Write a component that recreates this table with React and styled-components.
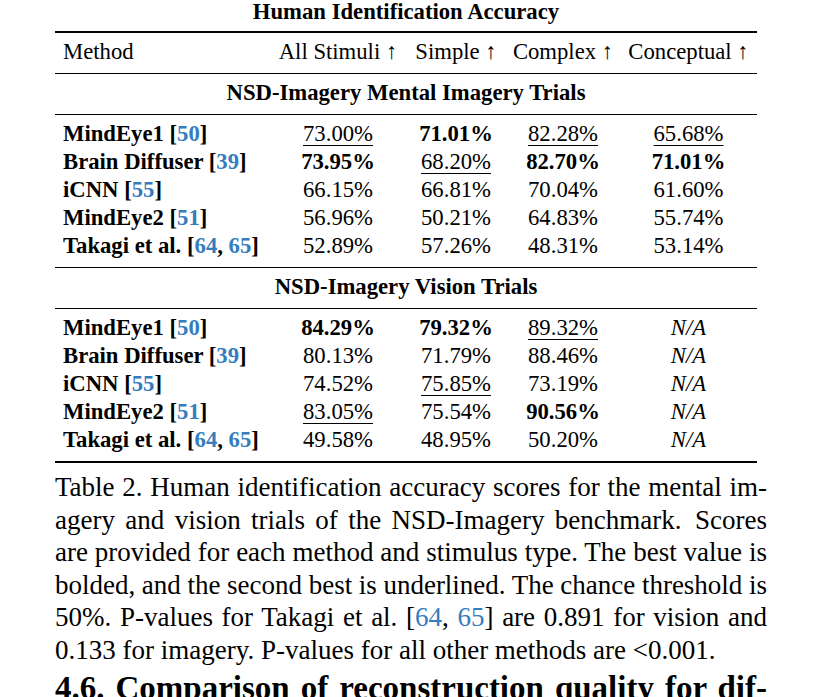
import React from "react";
import styled, { createGlobalStyle } from "styled-components";

const Global = createGlobalStyle`
  html, body { margin: 0; padding: 0; background: #fff; overflow: hidden; }
  body { font-family: "Liberation Serif", "DejaVu Serif", serif; color: #000; }
`;

const Page = styled.div`
  width: 712px;
  margin-left: 55px;
`;

const Table = styled.div`
  width: 702px;
  font-size: 22.7px;
`;

const Title = styled.div`
  font-weight: 700;
  text-align: center;
  line-height: 24px;
  margin-bottom: 7px;
`;

const Rule = styled.div`
  height: ${(p) => p.$w}px;
  background: #000;
`;

const Block = styled.div`
  display: grid;
  grid-template-columns: 215px 136px 100px 114px 137px;
  grid-auto-rows: 28px;
  padding: 5px 0 7px;
`;

const Cell = styled.div`
  line-height: 28px;
  white-space: nowrap;
  text-align: ${(p) => (p.$method ? "left" : "center")};
  padding-left: ${(p) => (p.$method ? "8px" : "0")};
  font-weight: ${(p) => (p.$bold ? 700 : 400)};
  font-style: ${(p) => (p.$italic ? "italic" : "normal")};
`;

const SectionTitle = styled.div`
  grid-column: 1 / -1;
  text-align: center;
  line-height: 28px;
  font-weight: 700;
`;

const Val = styled.span`
  text-decoration: ${(p) => (p.$u ? "underline" : "none")};
  text-decoration-thickness: 1px;
  text-underline-offset: 4px;
`;

const Cite = styled.span`
  color: #367dbd;
`;

const Caption = styled.div`
  margin-top: 8px;
  font-size: 27px;
  line-height: 32.6px;
`;

const Line = styled.div`
  text-align: ${(p) => (p.$last ? "left" : "justify")};
  text-align-last: ${(p) => (p.$last ? "left" : "justify")};
  word-spacing: ${(p) => (p.$last ? "0" : "-2px")};
`;

const Heading = styled.div`
  margin-top: 2px;
  font-size: 33px;
  line-height: 39.6px;
  font-weight: 700;
  text-align: justify;
  text-align-last: justify;
  white-space: nowrap;
`;

const Refs = ({ nums }) => (
  <>
    [
    {nums.map((n, i) => (
      <React.Fragment key={n}>
        {i > 0 && ", "}
        <Cite>{n}</Cite>
      </React.Fragment>
    ))}
    ]
  </>
);

const methods = [
  ["MindEye1", [50]],
  ["Brain Diffuser", [39]],
  ["iCNN", [55]],
  ["MindEye2", [51]],
  ["Takagi et al.", [64, 65]],
];

// value, style: "b" bold, "u" underline, "i" italic
const mental = [
  [["73.00%", "u"], ["71.01%", "b"], ["82.28%", "u"], ["65.68%", "u"]],
  [["73.95%", "b"], ["68.20%", "u"], ["82.70%", "b"], ["71.01%", "b"]],
  [["66.15%"], ["66.81%"], ["70.04%"], ["61.60%"]],
  [["56.96%"], ["50.21%"], ["64.83%"], ["55.74%"]],
  [["52.89%"], ["57.26%"], ["48.31%"], ["53.14%"]],
];

const vision = [
  [["84.29%", "b"], ["79.32%", "b"], ["89.32%", "u"], ["N/A", "i"]],
  [["80.13%"], ["71.79%"], ["88.46%"], ["N/A", "i"]],
  [["74.52%"], ["75.85%", "u"], ["73.19%"], ["N/A", "i"]],
  [["83.05%", "u"], ["75.54%"], ["90.56%", "b"], ["N/A", "i"]],
  [["49.58%"], ["48.95%"], ["50.20%"], ["N/A", "i"]],
];

const Rows = ({ data }) =>
  data.map((row, r) => (
    <React.Fragment key={r}>
      <Cell $method $bold>
        {methods[r][0]} <Refs nums={methods[r][1]} />
      </Cell>
      {row.map(([v, s], c) => (
        <Cell key={c} $bold={s === "b"} $italic={s === "i"}>
          <Val $u={s === "u"}>{v}</Val>
        </Cell>
      ))}
    </React.Fragment>
  ));

export default function App() {
  return (
    <>
      <Global />
      <Page>
        <Table>
          <Title>Human Identification Accuracy</Title>
          <Rule $w={2} />
          <Block>
            <Cell $method>Method</Cell>
            <Cell>All Stimuli ↑</Cell>
            <Cell>Simple ↑</Cell>
            <Cell>Complex ↑</Cell>
            <Cell>Conceptual ↑</Cell>
          </Block>
          <Rule $w={1} />
          <Block>
            <SectionTitle>NSD-Imagery Mental Imagery Trials</SectionTitle>
          </Block>
          <Rule $w={1} />
          <Block>
            <Rows data={mental} />
          </Block>
          <Rule $w={1} />
          <Block>
            <SectionTitle>NSD-Imagery Vision Trials</SectionTitle>
          </Block>
          <Rule $w={1} />
          <Block>
            <Rows data={vision} />
          </Block>
          <Rule $w={2} />
        </Table>
        <Caption>
          <Line>Table 2. Human identification accuracy scores for the mental im-</Line>
          <Line>agery and vision trials of the NSD-Imagery benchmark.{"\u2002"}Scores</Line>
          <Line>are provided for each method and stimulus type. The best value is</Line>
          <Line>bolded, and the second best is underlined. The chance threshold is</Line>
          <Line>
            50%. P-values for Takagi et al. <Refs nums={[64, 65]} /> are 0.891 for vision and
          </Line>
          <Line $last>0.133 for imagery. P-values for all other methods are &lt;0.001.</Line>
        </Caption>
        <Heading>4.6. Comparison of reconstruction quality for dif-</Heading>
      </Page>
    </>
  );
}
